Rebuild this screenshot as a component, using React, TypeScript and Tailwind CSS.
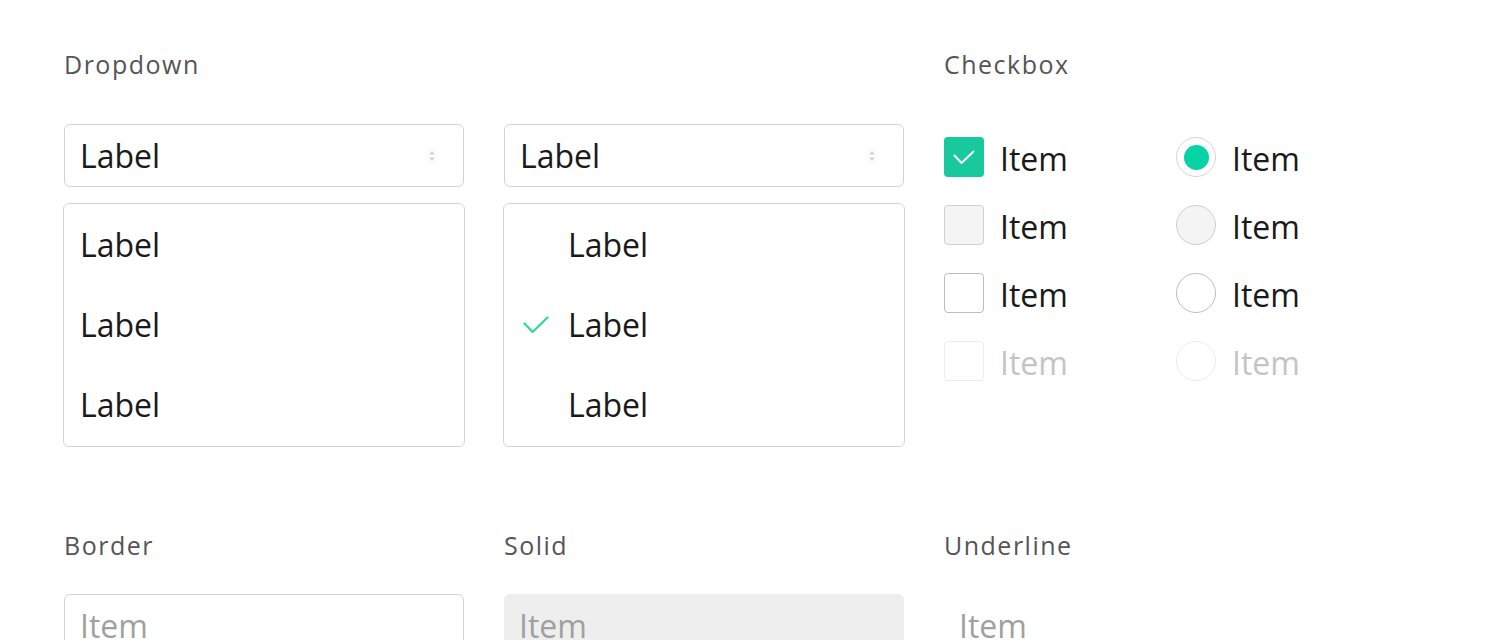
const font = { fontFamily: '"Open Sans", "Noto Sans", sans-serif' };

const Heading = ({ children }: { children: string }) => (
  <h2 className="h-8 text-[25px] leading-8 tracking-[1.5px] text-[#555]">{children}</h2>
);

const SelectArrows = () => (
  <svg width="8" height="12" viewBox="0 0 8 12" className="text-[#d0d0d0]">
    <path d="M4 1 L7 4.5 H1 Z" fill="currentColor" />
    <path d="M4 11 L7 7.5 H1 Z" fill="currentColor" />
  </svg>
);

const Select = () => (
  <div className="flex h-[63px] w-[400px] items-center justify-between rounded-[6px] border border-[#d4d4d4] pl-[15px] pr-[27px] text-[32px] text-[#1a1a1a]">
    <span className="pt-px">Label</span>
    <SelectArrows />
  </div>
);

const Check = ({ className }: { className?: string }) => (
  <svg width="26" height="18" viewBox="0 0 26 18" fill="none" className={className}>
    <path d="M1.5 7.5 L9.5 16 L24.5 1.5" stroke="currentColor" strokeWidth="2.2" strokeLinecap="round" strokeLinejoin="round" />
  </svg>
);

const DropdownList = ({ withCheck }: { withCheck?: boolean }) => (
  <div className="-mx-px mt-[16px] flex h-[244px] flex-col rounded-[6px] border border-[#d4d4d4] py-px text-[32px] text-[#1a1a1a]">
    {['Label', 'Label', 'Label'].map((label, i) => (
      <div key={i} className="flex h-[80px] items-center">
        {withCheck ? (
          <div className="flex w-[64px] items-center pl-[19px]">
            {i === 1 && <Check className="text-[#2fdc8c]" />}
          </div>
        ) : (
          <div className="w-[16px]" />
        )}
        <span className="-mt-px">{label}</span>
      </div>
    ))}
  </div>
);

type BoxState = 'checked' | 'filled' | 'empty' | 'disabled';

const boxCls = (state: BoxState) =>
  state === 'filled'
    ? 'border-[#cfcfcf] bg-[#f4f4f4]'
    : state === 'empty'
      ? 'border-[#bdbdbd] bg-white'
      : 'border-[#ececec] bg-white';

const CheckBox = ({ state }: { state: BoxState }) => {
  if (state === 'checked')
    return (
      <div className="flex h-[40px] w-[40px] items-center justify-center rounded-[4px] bg-[#17c99c]">
        <svg width="22" height="15" viewBox="0 0 22 15" fill="none">
          <path d="M1.5 5.5 L8.5 13 L20.5 1.5" stroke="white" strokeWidth="2" strokeLinecap="round" strokeLinejoin="round" />
        </svg>
      </div>
    );
  return <div className={`h-[40px] w-[40px] rounded-[4px] border ${boxCls(state)}`} />;
};

const Radio = ({ state }: { state: BoxState }) => {
  if (state === 'checked')
    return (
      <div className="flex h-[40px] w-[40px] items-center justify-center rounded-full border border-[#d6d6d6] bg-white">
        <div className="h-[25px] w-[25px] rounded-full bg-[#03d3a5]" />
      </div>
    );
  return <div className={`h-[40px] w-[40px] rounded-full border ${boxCls(state)}`} />;
};

const states: BoxState[] = ['checked', 'filled', 'empty', 'disabled'];

const ItemText = ({ disabled }: { disabled?: boolean }) => (
  <span className={`pt-[4px] text-[32px] ${disabled ? 'text-[#c4c4c4]' : 'text-[#1a1a1a]'}`}>Item</span>
);

export default function App() {
  return (
    <div style={font} className="h-[640px] w-[1500px] overflow-hidden bg-white pl-[64px] pt-[48px]">
      {/* Row 1 */}
      <div className="flex gap-[40px]">
        <div className="w-[400px]">
          <Heading>Dropdown</Heading>
          <div className="mt-[44px]">
            <Select />
            <DropdownList />
          </div>
        </div>
        <div className="w-[400px]">
          <div className="h-8" />
          <div className="mt-[44px]">
            <Select />
            <DropdownList withCheck />
          </div>
        </div>
        <div className="w-[400px]">
          <Heading>Checkbox</Heading>
          <div className="mt-[57px] grid grid-cols-[232px_232px] gap-y-[28px]">
            {states.map((s) => (
              <div key={s} className="contents">
                <div className="flex h-[40px] items-center gap-[16px]">
                  <CheckBox state={s} />
                  <ItemText disabled={s === 'disabled'} />
                </div>
                <div className="flex h-[40px] items-center gap-[16px]">
                  <Radio state={s} />
                  <ItemText disabled={s === 'disabled'} />
                </div>
              </div>
            ))}
          </div>
        </div>
      </div>

      {/* Row 2 */}
      <div className="mt-[82px] flex gap-[40px]">
        <div className="w-[400px]">
          <Heading>Border</Heading>
          <div className="mt-[33px] flex h-[64px] items-center rounded-[6px] border border-[#d4d4d4] pl-[15px] text-[32px] text-[#a0a0a0]">
            Item
          </div>
        </div>
        <div className="w-[400px]">
          <Heading>Solid</Heading>
          <div className="mt-[33px] flex h-[64px] items-center rounded-[6px] bg-[#eeeeee] pl-[15px] text-[32px] text-[#a0a0a0]">
            Item
          </div>
        </div>
        <div className="w-[400px]">
          <Heading>Underline</Heading>
          <div className="mt-[33px] flex h-[64px] items-center border-b border-[#d4d4d4] pl-[15px] text-[32px] text-[#a0a0a0]">
            Item
          </div>
        </div>
      </div>
    </div>
  );
}
